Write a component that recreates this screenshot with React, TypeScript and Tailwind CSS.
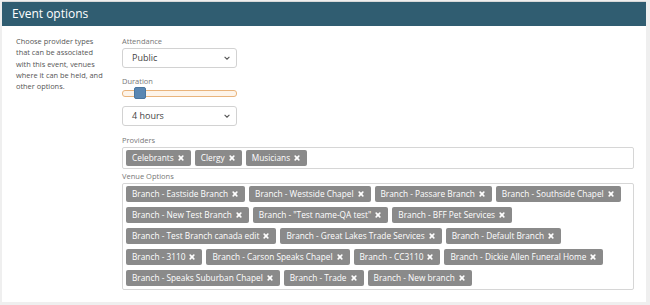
import React from "react";

const providers = ["Celebrants", "Clergy", "Musicians"];
const venueRows = [
  [
    "Branch - Eastside Branch",
    "Branch - Westside Chapel",
    "Branch - Passare Branch",
    "Branch - Southside Chapel",
  ],
  [
    "Branch - New Test Branch",
    'Branch - "Test name-QA test"',
    "Branch - BFF Pet Services",
  ],
  [
    "Branch - Test Branch canada edit",
    "Branch - Great Lakes Trade Services",
    "Branch - Default Branch",
  ],
  [
    "Branch - 3110",
    "Branch - Carson Speaks Chapel",
    "Branch - CC3110",
    "Branch - Dickie Allen Funeral Home",
  ],
  ["Branch - Speaks Suburban Chapel", "Branch - Trade", "Branch - New branch"],
];

function X() {
  return (
    <svg width="6" height="6" viewBox="0 0 10 10" className="ml-[4px] shrink-0">
      <path d="M2 2 L8 8 M8 2 L2 8" stroke="white" strokeWidth="2.8" strokeLinecap="round" />
    </svg>
  );
}

function Tag({ label }: { label: string }) {
  return (
    <span className="flex items-center h-[16px] pl-[6px] pr-[7px] bg-[#8a8a8a] rounded-[2px] text-white text-[8.3px] leading-none whitespace-nowrap">
      {label}
      <X />
    </span>
  );
}

function Chevron() {
  return (
    <svg width="6" height="4" viewBox="0 0 10 6">
      <path d="M1 1 L5 5 L9 1" fill="none" stroke="#555" strokeWidth="1.8" />
    </svg>
  );
}

function Select({ value }: { value: string }) {
  return (
    <div className="w-[115px] h-[20px] border border-[#d2d2d2] rounded-[3px] bg-white flex items-center justify-between pl-[9px] pr-[6px] text-[9px] text-[#444]">
      <span>{value}</span>
      <Chevron />
    </div>
  );
}

export default function App() {
  return (
    <div
      className="w-[650px] h-[305px] bg-[#efefef] pt-[1px] pl-[2px] pr-[4px] pb-[3px]"
      style={{ fontFamily: '"Open Sans", "Noto Sans", sans-serif' }}
    >
      <div className="h-full bg-white border-t border-[#d8d8d8] flex flex-col overflow-hidden">
        <div className="h-[24px] shrink-0 bg-[#305d71] flex items-center pl-[10px] text-white text-[12px]">
          Event options
        </div>
        <div className="flex pt-[10px]">
          <div className="w-[120px] pl-[14px] text-[7.4px] leading-[11.3px] text-[#555]">
            Choose provider types
            <br />
            that can be associated
            <br />
            with this event, venues
            <br />
            where it can be held, and
            <br />
            other options.
          </div>
          <div className="flex-1 pr-[12px] flex flex-col">
            <div className="text-[7.5px] text-[#777] leading-[11px] h-[12px]">Attendance</div>
            <Select value="Public" />
            <div className="text-[7.5px] text-[#777] leading-[12px] mt-[7px] h-[12px]">Duration</div>
            <div className="relative w-[115px] h-[12px] flex items-center">
              <div className="w-full h-[7px] rounded-[3px] border border-[#e9b47c] bg-[#fdf4ea]" />
              <div className="absolute left-[12px] top-0 w-[12px] h-[12px] rounded-[2px] bg-[#5a87b3] border border-[#4a76a0]" />
            </div>
            <div className="mt-[7px]">
              <Select value="4 hours" />
            </div>
            <div className="text-[7.5px] text-[#777] leading-[12px] mt-[8px] h-[13px]">Providers</div>
            <div className="border border-[#d6d6d6] rounded-[2px] h-[22px] flex items-center gap-[4px] px-[3px]">
              {providers.map((p) => (
                <Tag key={p} label={p} />
              ))}
            </div>
            <div className="text-[7.5px] text-[#777] leading-[14px] h-[14px]">Venue Options</div>
            <div className="border border-[#d6d6d6] rounded-[2px] flex flex-col gap-[5px] px-[3px] pt-[2px] pb-[3px]">
              {venueRows.map((row, i) => (
                <div key={i} className="flex gap-[4px]">
                  {row.map((v) => (
                    <Tag key={v} label={v} />
                  ))}
                </div>
              ))}
            </div>
          </div>
        </div>
      </div>
    </div>
  );
}
